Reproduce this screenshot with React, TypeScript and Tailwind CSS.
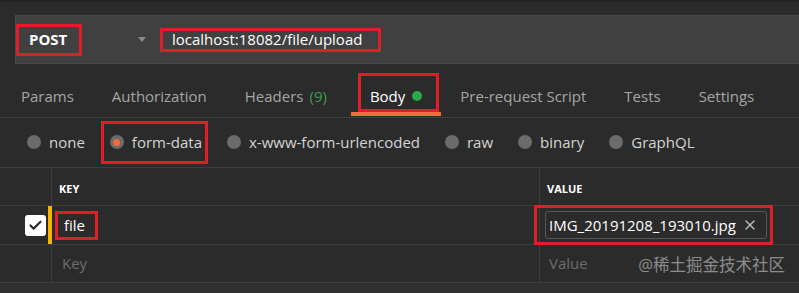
import { Check, X } from 'lucide-react'

const tabs = ['Params', 'Authorization', 'Headers', 'Body', 'Pre-request Script', 'Tests', 'Settings']
const bodyTypes = ['none', 'form-data', 'x-www-form-urlencoded', 'raw', 'binary', 'GraphQL']

function RedBox({ className }: { className: string }) {
  return <div className={`absolute border-[3px] border-[#e11d2a] pointer-events-none ${className}`} />
}

export default function App() {
  return (
    <div
      className="w-[799px] h-[293px] overflow-hidden bg-[#2b2b2b] text-[15px] text-[#a6a6a6] flex flex-col"
      style={{ fontFamily: '"Open Sans", "Noto Sans CJK SC", sans-serif' }}
    >
      {/* url bar */}
      <div className="h-[74px] border-t-2 border-[#222] pt-[13px] pl-[15px]">
        <div className="h-[49px] bg-[#404040] border border-[#4a4a4a] border-r-0 flex items-center">
          <div className="relative w-[66px] h-[32px] flex items-center pl-[13px] font-bold text-white text-[15px]">
            POST
            <RedBox className="inset-0" />
          </div>
          <div className="ml-[56px] w-0 h-0 border-l-[4px] border-r-[4px] border-t-[5px] border-l-transparent border-r-transparent border-t-[#8a8a8a]" />
          <div className="relative ml-[14px] w-[221px] h-[24px] flex items-center pl-[12px] text-white text-[15px]">
            localhost:18082/file/upload
            <RedBox className="inset-0" />
          </div>
        </div>
      </div>

      {/* tabs */}
      <div className="h-[46px] border-b border-[#3d3d3d] flex items-stretch pl-[2px]">
        {tabs.map((t) => (
          <div
            key={t}
            className={`relative px-[19px] pt-[3px] flex items-center ${t === 'Body' ? 'text-white ml-[5px]' : ''}`}
          >
            {t}
            {t === 'Headers' && <span className="ml-[6px] text-[#3e9c4e]">(9)</span>}
            {t === 'Body' && (
              <>
                <span className="ml-[7px] w-[10px] h-[10px] rounded-full bg-[#2aa84a]" />
                <div className="absolute left-0 right-0 bottom-[1px] h-[4px] bg-[#f26b3a]" />
                <RedBox className="left-[7px] right-[2px] top-0 bottom-[5px]" />
              </>
            )}
          </div>
        ))}
      </div>

      {/* body types */}
      <div className="h-[50px] flex items-center pl-[27px] gap-[25px] text-[#d4d4d4]">
        {bodyTypes.map((b) => (
          <div key={b} className="relative flex items-center">
            {b === 'form-data' ? (
              <span className="w-[14px] h-[14px] rounded-full bg-[#6b6b6b] flex items-center justify-center">
                <span className="w-[7px] h-[7px] rounded-full bg-[#f26b3a]" />
              </span>
            ) : (
              <span className="w-[14px] h-[14px] rounded-full bg-[#6b6b6b]" />
            )}
            <span className="ml-[8px]">{b}</span>
            {b === 'form-data' && <RedBox className="-left-[9px] -right-[6px] -top-[10px] -bottom-[10px]" />}
          </div>
        ))}
      </div>

      {/* table */}
      <div className="border-t border-[#3d3d3d]">
        <div className="h-[38px] flex border-b border-[#3d3d3d]">
          <div className="w-[52px] border-r border-[#3d3d3d]" />
          <div className="w-[488px] border-r border-[#3d3d3d] flex items-center pl-[7px] pt-[5px] text-[11px] font-bold text-white">
            KEY
          </div>
          <div className="flex-1 flex items-center pl-[7px] pt-[5px] text-[11px] font-bold text-white">VALUE</div>
        </div>

        <div className="h-[39px] flex border-b border-[#3d3d3d]">
          <div className="w-[52px] border-r border-[#3d3d3d] flex items-center justify-end relative">
            <span className="mr-[5px] w-[21px] h-[21px] rounded-[3px] bg-white flex items-center justify-center">
              <Check size={15} strokeWidth={3.5} className="text-[#2b2b2b]" />
            </span>
            <span className="absolute right-[-1px] top-0 bottom-0 w-[4px] bg-[#f5b400]" />
          </div>
          <div className="w-[488px] border-r border-[#3d3d3d] flex items-center pl-[3px]">
            <div className="relative h-[29px] w-[43px] flex items-center pl-[9px] text-white">
              file
              <RedBox className="inset-0" />
            </div>
          </div>
          <div className="flex-1 flex items-center pl-[5px] relative">
            <div className="h-[28px] w-[222px] border border-[#575757] rounded-[3px] flex items-center pl-[3px] text-white">
              IMG_20191208_193010.jpg
              <X size={16} strokeWidth={2} className="ml-auto mr-[8px] text-[#bdbdbd]" />
            </div>
            <RedBox className="left-[-6px] w-[239px] top-[-1px] bottom-[-1px]" />
          </div>
        </div>

        <div className="h-[38px] flex border-b border-[#3d3d3d]">
          <div className="w-[52px] border-r border-[#3d3d3d]" />
          <div className="w-[488px] border-r border-[#3d3d3d] flex items-center pl-[10px] text-[#6e6e6e]">
            Key
          </div>
          <div className="flex-1 flex items-center pl-[9px] text-[#6e6e6e] relative">
            Value
            <span className="absolute right-[14px] top-[8px] text-[#8c8c8c] text-[16.5px]">@稀土掘金技术社区</span>
          </div>
        </div>
        <div className="h-[10px] bg-[#303030]" />
      </div>
    </div>
  )
}
